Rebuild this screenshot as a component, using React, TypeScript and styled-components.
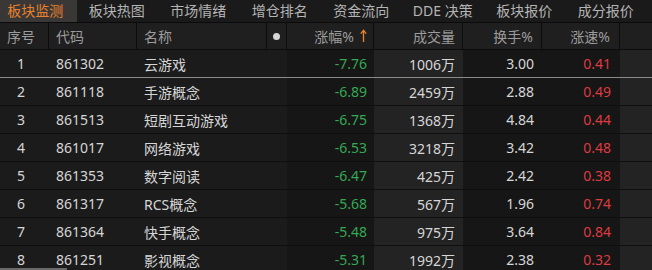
import React from "react";
import styled, { createGlobalStyle } from "styled-components";

const Global = createGlobalStyle`
  html, body { margin: 0; padding: 0; background: #1b1b1b; }
  * { box-sizing: border-box; }
`;

const FONT = `"Noto Sans", "Noto Sans CJK SC", sans-serif`;
const COLS = "49px 88px 130px 20px 87px 89px 79px 78px 1fr";

const Screen = styled.div`
  position: relative;
  width: 652px;
  height: 270px;
  overflow: hidden;
  background: #1b1b1b;
  font-family: ${FONT};
  font-size: 14px;
`;

const TabBar = styled.div`
  display: flex;
  height: 23px;
  background: #1a1a1a;
  border-bottom: 1px solid #0b0b0b;
`;

const Tab = styled.div<{ $active?: boolean }>`
  width: 77px;
  margin-right: 5px;
  padding-right: 6px;
  display: flex;
  align-items: center;
  justify-content: center;
  white-space: nowrap;
  background: ${(p) => (p.$active ? "#3a3836" : "transparent")};
  color: ${(p) => (p.$active ? "#e8802e" : "#b4b4b4")};
  line-height: 22px;
`;

const Grid = styled.div`
  display: grid;
  grid-template-columns: ${COLS};
`;

const HeaderRow = styled(Grid)`
  height: 27px;
  background: #1f1f1f;
  border-bottom: 1px solid #0c0c0c;
`;

const HeadCell = styled.div<{ $align?: "left" | "right" | "center"; $pr?: number }>`
  display: flex;
  align-items: center;
  justify-content: ${(p) =>
    p.$align === "right" ? "flex-end" : p.$align === "center" ? "center" : "flex-start"};
  padding-left: ${(p) => (p.$align === "center" ? 0 : 7)}px;
  padding-right: ${(p) => (p.$align === "center" ? 0 : p.$pr ?? 7)}px;
  border-right: 1px solid #0c0c0c;
  color: #9c9c9c;
  white-space: nowrap;
  gap: 6px;
  &:last-child { border-right: none; }
`;

const Dot = styled.span`
  flex: 0 0 7px;
  width: 7px;
  height: 7px;
  border-radius: 50%;
  background: #d6d6d6;
`;

const Row = styled(Grid)<{ $selected?: boolean }>`
  height: 28px;
  border-bottom: 1px solid ${(p) => (p.$selected ? "#8a8a8a" : "#0f0f0f")};
`;

type Tone = "base" | "dark" | "light";
const BG: Record<Tone, string> = { base: "#1b1b1b", dark: "#161616", light: "#232323" };

const Cell = styled.div<{ $tone?: Tone; $align?: "left" | "right" | "center"; $color?: string; $pr?: number }>`
  display: flex;
  align-items: center;
  justify-content: ${(p) =>
    p.$align === "right" ? "flex-end" : p.$align === "center" ? "center" : "flex-start"};
  padding-left: 7px;
  padding-right: ${(p) => p.$pr ?? 7}px;
  background: ${(p) => BG[p.$tone ?? "base"]};
  color: ${(p) => p.$color ?? "#d6d6d6"};
  white-space: nowrap;
`;

const ScrollThumb = styled.div`
  position: absolute;
  left: 0;
  bottom: 0;
  width: 67px;
  height: 2px;
  background: #6a6a6a;
`;

const SortArrow = () => (
  <svg width="7" height="14" viewBox="0 0 7 14" fill="none">
    <path d="M3.5 13V2" stroke="#e8802e" strokeWidth="1.4" />
    <path d="M0.8 4.6L3.5 1.4L6.2 4.6" stroke="#e8802e" strokeWidth="1.4" />
  </svg>
);

const tabs = ["板块监测", "板块热图", "市场情绪", "增仓排名", "资金流向", "DDE 决策", "板块报价", "成分报价"];

const rows = [
  ["1", "861302", "云游戏", "-7.76", "1006万", "3.00", "0.41"],
  ["2", "861118", "手游概念", "-6.89", "2459万", "2.88", "0.49"],
  ["3", "861513", "短剧互动游戏", "-6.75", "1368万", "4.84", "0.44"],
  ["4", "861017", "网络游戏", "-6.53", "3218万", "3.42", "0.48"],
  ["5", "861353", "数字阅读", "-6.47", "425万", "2.42", "0.38"],
  ["6", "861317", "RCS概念", "-5.68", "567万", "1.96", "0.74"],
  ["7", "861364", "快手概念", "-5.48", "975万", "3.64", "0.84"],
  ["8", "861251", "影视概念", "-5.31", "1992万", "2.38", "0.32"],
];

const GREEN = "#35a853";
const RED = "#df3a3f";

export default function App() {
  return (
    <Screen>
      <Global />
      <TabBar>
        {tabs.map((t, i) => (
          <Tab key={t} $active={i === 0}>
            {t}
          </Tab>
        ))}
      </TabBar>
      <HeaderRow>
        <HeadCell>序号</HeadCell>
        <HeadCell>代码</HeadCell>
        <HeadCell>名称</HeadCell>
        <HeadCell $align="center">
          <Dot />
        </HeadCell>
        <HeadCell $align="right" $pr={6}>
          涨幅%
          <SortArrow />
        </HeadCell>
        <HeadCell $align="right">成交量</HeadCell>
        <HeadCell $align="right" $pr={8}>换手%</HeadCell>
        <HeadCell $align="right" $pr={9}>涨速%</HeadCell>
        <HeadCell />
      </HeaderRow>
      {rows.map((r, i) => (
        <Row key={r[1]} $selected={i === 0}>
          <Cell $align="center" $pr={14}>{r[0]}</Cell>
          <Cell>{r[1]}</Cell>
          <Cell>{r[2]}</Cell>
          <Cell />
          <Cell $tone="dark" $align="right" $color={GREEN}>{r[3]}</Cell>
          <Cell $tone="light" $align="right" $pr={8}>{r[4]}</Cell>
          <Cell $tone="dark" $align="right" $pr={8}>{r[5]}</Cell>
          <Cell $tone="dark" $align="right" $pr={9} $color={RED}>{r[6]}</Cell>
          <Cell $tone="light" />
        </Row>
      ))}
      <ScrollThumb />
    </Screen>
  );
}
